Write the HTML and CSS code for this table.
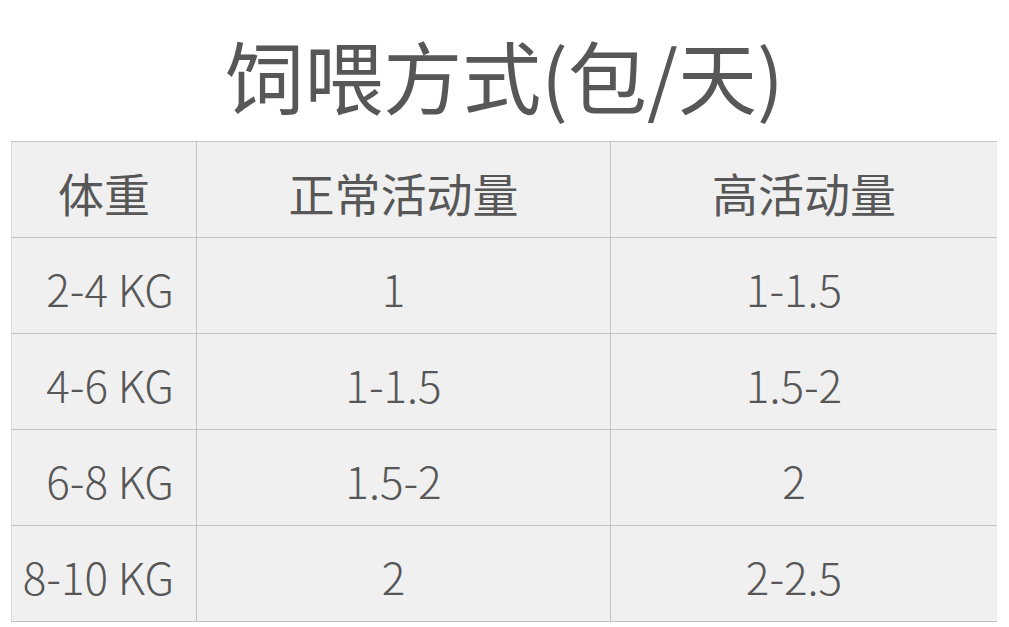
FILE: index.html
```html
<!DOCTYPE html>
<html lang="zh">
<head>
<meta charset="utf-8">
<link rel="stylesheet" href="styles.css">
</head>
<body>
<div class="page">
  <h1 class="title">饲喂方式(包/天)</h1>
  <table class="feed">
    <thead>
      <tr><th class="c1">体重</th><th class="c2">正常活动量</th><th class="c3">高活动量</th></tr>
    </thead>
    <tbody>
      <tr><td class="w">2-4 KG</td><td>1</td><td>1-1.5</td></tr>
      <tr><td class="w">4-6 KG</td><td>1-1.5</td><td>1.5-2</td></tr>
      <tr><td class="w">6-8 KG</td><td>1.5-2</td><td>2</td></tr>
      <tr><td class="w">8-10 KG</td><td>2</td><td>2-2.5</td></tr>
    </tbody>
  </table>
</div>
</body>
</html>
```

FILE: styles.css
```css
html, body {
  margin: 0;
  padding: 0;
  background: #ffffff;
}
.page {
  width: 1009px;
  height: 627px;
  overflow: hidden;
  font-family: "Noto Sans CJK SC", "Noto Sans", sans-serif;
  color: #575757;
}
.title {
  margin: 0;
  height: 141px;
  box-sizing: border-box;
  padding-top: 35px;
  font-size: 79px;
  line-height: 79px;
  font-weight: 400;
  text-align: center;
  letter-spacing: 0;
}
.feed {
  margin-left: 11px;
  width: 985px;
  border-collapse: collapse;
  table-layout: fixed;
}
.feed th, .feed td {
  background: #f0f0f0;
  border: 1px solid #c4c4c4;
  height: 91px;
  padding: 4px 0 0 0;
  text-align: center;
  vertical-align: middle;
}
.feed tr > :first-child { border-left-color: #dcdcdc; }
.feed tr > :last-child { border-right: none; }
.feed th {
  font-size: 46px;
  font-weight: 400;
}
.feed td {
  font-size: 44px;
  font-weight: 300;
  padding-right: 20px;
}
.feed td.w {
  text-align: right;
  padding-right: 22px;
}
.c1 { width: 184px; }
.c2 { width: 413px; }
.c3 { width: 386px; }
```
